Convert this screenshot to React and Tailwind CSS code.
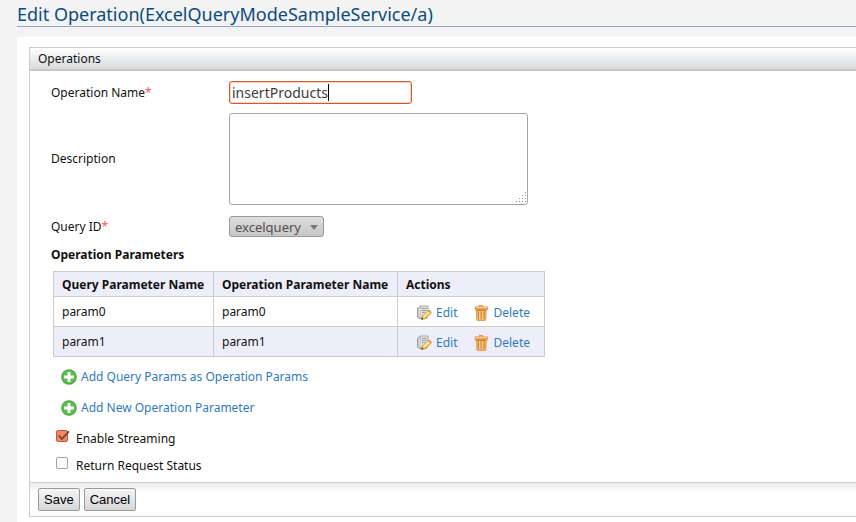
import React from "react";

const ROWS = [
  { query: "param0", operation: "param0" },
  { query: "param1", operation: "param1" },
];

function EditIcon() {
  return (
    <svg width="16" height="16" viewBox="0 0 16 16" aria-hidden="true" className="shrink-0">
      <path d="M4.500 1h7.500v9.500l-1.500 3H3l-1.500-1.500V3.500z" fill="#c4c4c3" stroke="#8f8f8d" strokeWidth="0.800" />
      <path d="M5 1.500h6.500v9.500H5z" fill="#dededd" />
      <path d="M3.500 3.500v8" stroke="#eeeeee" strokeWidth="0.800" />
      <path d="M6 3.500h4.500M6 5.500h4.500M6 7.500h3" stroke="#a2a2a0" />
      <path d="M5.500 14.500l1-3.500 6-5.500 2.700 2.700-6 5.500z" fill="#f6cf55" stroke="#b9873a" strokeWidth="0.700" />
      <path d="M7.800 11.500l5.200-4.800" stroke="#fdeea6" strokeWidth="1.300" />
      <path d="M12.200 5.700l1.100-0.900 2.400 2.400-0.900 1z" fill="#d88a4e" />
      <path d="M5.300 14.800l0.600-2.200 1.600 1.500z" fill="#3f3a32" />
    </svg>
  );
}

function DeleteIcon() {
  return (
    <svg width="16" height="16" viewBox="0 0 16 16" aria-hidden="true" className="shrink-0">
      <path d="M6 2V0.700h4V2" fill="none" stroke="#d08a35" />
      <path d="M2 1.800h12.500v2.900H2z" fill="#f0a04a" stroke="#d98a38" strokeWidth="0.600" />
      <path d="M2.500 2.500h11.500" stroke="#fbd19a" />
      <path d="M3.300 5h10l-0.400 9.500q-0.100 1-1 1H4.700q-0.900 0-1-1z" fill="#f4b566" stroke="#d98a38" strokeWidth="0.700" />
      <path d="M3.500 5.400h9.500" stroke="#c4741f" strokeWidth="0.800" />
      <path d="M5.500 6.500v7.500M8.300 6.500v7.500M11 6.500v7.500" stroke="#cf7e2b" />
      <path d="M6.500 6.500v7.500M9.300 6.500v7.500" stroke="#fde0b0" strokeWidth="0.800" />
    </svg>
  );
}

function AddIcon() {
  return (
    <svg width="16" height="16" viewBox="0 0 16 16" aria-hidden="true" className="shrink-0">
      <circle cx="8" cy="8" r="7.800" fill="#45ab3b" />
      <circle cx="8" cy="8" r="6.800" fill="#5cbc50" />
      <path d="M6.500 3h3v3.500H13v3H9.500V13h-3V9.500H3v-3h3.500z" fill="#fff" />
    </svg>
  );
}

function IconLink({ icon, children }) {
  return (
    <a href="#" className="inline-flex items-center gap-1 text-[#2f7abd]">
      {icon}
      {children}
    </a>
  );
}

function Required() {
  return <span className="text-[#ff5555]">*</span>;
}

function CheckRow({ id, label, defaultChecked }) {
  return (
    <div className="flex h-[27px] items-center gap-2 pl-[5px]">
      <span className="relative mb-[6px] block size-3">
        <input
          id={id}
          type="checkbox"
          defaultChecked={defaultChecked}
          className="peer block size-3 appearance-none rounded-[2px] border border-[#a5a199] bg-white checked:border-[#c05a38] checked:bg-[#f58a62]"
        />
        <svg
          width="14"
          height="12"
          viewBox="0 0 14 12"
          aria-hidden="true"
          className="pointer-events-none absolute top-0 left-0 hidden peer-checked:block"
        >
          <path d="M2.800 5.500l3 3.500L13 1.300" fill="none" stroke="#6b4636" strokeWidth="1.800" />
        </svg>
      </span>
      <label htmlFor={id}>{label}</label>
    </div>
  );
}

const LABEL = "w-[178px] shrink-0";
const CELL = "border border-[#cccccc] px-2 text-left";
const BUTTON =
  "h-[23px] rounded-[2px] border border-[#999999] bg-linear-to-b from-[#f6f6f6] to-[#d6d6d6] px-[5px] font-['Liberation_Sans',Arial,sans-serif] text-[13px] leading-4 text-black";

export default function App() {
  return (
    <div className="min-h-screen overflow-hidden bg-[#f3f3f3] pl-[17px] font-['Noto_Sans',sans-serif] text-[12px] leading-4 text-[#111111]">
      <h1 className="mb-[10px] h-[27px] border-b border-[#91a7d0] pt-[2px] text-[18px] leading-6 text-[#0b4c7d]">
        Edit Operation(ExcelQueryModeSampleService/a)
      </h1>
      <main className="min-h-[calc(100vh-37px)] bg-white pt-[10px] pl-3">
        <form className="border-y border-l border-[#cccccc]" onSubmit={(e) => e.preventDefault()}>
          <h2 className="flex h-[23px] items-center border-b-2 border-[#c8c8c8] bg-linear-to-b from-white to-[#d9dbdd] px-2">
            Operations
          </h2>
          <div className="px-[21px] pt-[10px] pb-[3px]">
            <div className="flex items-center">
              <label htmlFor="name" className={LABEL}>
                Operation Name
                <Required />
              </label>
              <div className="relative">
                <input
                  id="name"
                  type="text"
                  defaultValue="insertProducts"
                  className="block h-[23px] w-[183px] rounded-[3px] border border-[#d0592f] px-[2px] text-[14px] text-[#3c3c3c] shadow-[inset_0_0_0_1px_#fbd3c4] outline-none"
                />
                <span className="absolute top-[3px] left-[99px] h-[17px] w-px bg-black" />
              </div>
            </div>
            <div className="mt-[9px] flex items-center">
              <label htmlFor="description" className={LABEL}>
                Description
              </label>
              <div className="relative">
                <textarea
                  id="description"
                  className="block h-[92px] w-[299px] resize-none rounded-[3px] border border-[#a9a69e] p-1 text-[14px] outline-none"
                />
                <svg width="11" height="11" viewBox="0 0 11 11" fill="#8d8d8d" aria-hidden="true" className="absolute right-[1px] bottom-[2px]">
                  <path d="M9 0h1v1h-1zM6 3h1v1h-1zM9 3h1v1h-1zM3 6h1v1h-1zM6 6h1v1h-1zM9 6h1v1h-1zM0 9h1v1h-1zM3 9h1v1h-1zM6 9h1v1h-1zM9 9h1v1h-1z" />
                </svg>
              </div>
            </div>
            <div className="mt-[11px] flex items-center">
              <label htmlFor="query" className={LABEL}>
                Query ID
                <Required />
              </label>
              <div className="relative">
                <select
                  id="query"
                  className="block h-[21px] w-[95px] appearance-none rounded-[3px] border border-[#999999] bg-linear-to-b from-[#dedede] to-[#c6c6c6] pl-[5px] text-[13px] leading-4 text-[#505050]"
                >
                  <option>excelquery</option>
                </select>
                <svg width="8" height="5" viewBox="0 0 8 5" fill="#777777" aria-hidden="true" className="pointer-events-none absolute top-[9px] right-[6px]">
                  <path d="M0 0h8L4 5z" />
                </svg>
              </div>
            </div>
            <h3 className="mt-[10px] mb-2 font-bold">Operation Parameters</h3>
            <table className="ml-[2px] w-[492px] table-fixed border-collapse">
              <colgroup>
                <col className="w-[160px]" />
                <col className="w-[184px]" />
                <col />
              </colgroup>
              <thead>
                <tr className="h-[25px] bg-[#eeeefb]">
                  <th className={`${CELL} pt-[2px]`}>Query Parameter Name</th>
                  <th className={`${CELL} pt-[2px]`}>Operation Parameter Name</th>
                  <th className={`${CELL} pt-[2px]`}>Actions</th>
                </tr>
              </thead>
              <tbody>
                {ROWS.map((row) => (
                  <tr key={row.query} className="h-[30px] even:bg-[#eeeefb]">
                    <td className={CELL}>{row.query}</td>
                    <td className={CELL}>{row.operation}</td>
                    <td className={`${CELL} pt-[2px]`}>
                      <div className="flex gap-4 pl-[10px]">
                        <IconLink icon={<EditIcon />}>Edit</IconLink>
                        <IconLink icon={<DeleteIcon />}>Delete</IconLink>
                      </div>
                    </td>
                  </tr>
                ))}
              </tbody>
            </table>
            <div className="mt-3 mb-[9px] flex flex-col items-start gap-[15px] pl-[10px]">
              <IconLink icon={<AddIcon />}>Add Query Params as Operation Params</IconLink>
              <IconLink icon={<AddIcon />}>Add New Operation Parameter</IconLink>
            </div>
            <CheckRow id="streaming" label="Enable Streaming" defaultChecked />
            <CheckRow id="status" label="Return Request Status" />
          </div>
          <div className="flex gap-1 border-t border-[#cccccc] bg-linear-to-b from-[#eeeeee] to-white to-30% px-2 py-[5px]">
            <button type="submit" className={BUTTON}>Save</button>
            <button type="button" className={BUTTON}>Cancel</button>
          </div>
        </form>
      </main>
    </div>
  );
}
